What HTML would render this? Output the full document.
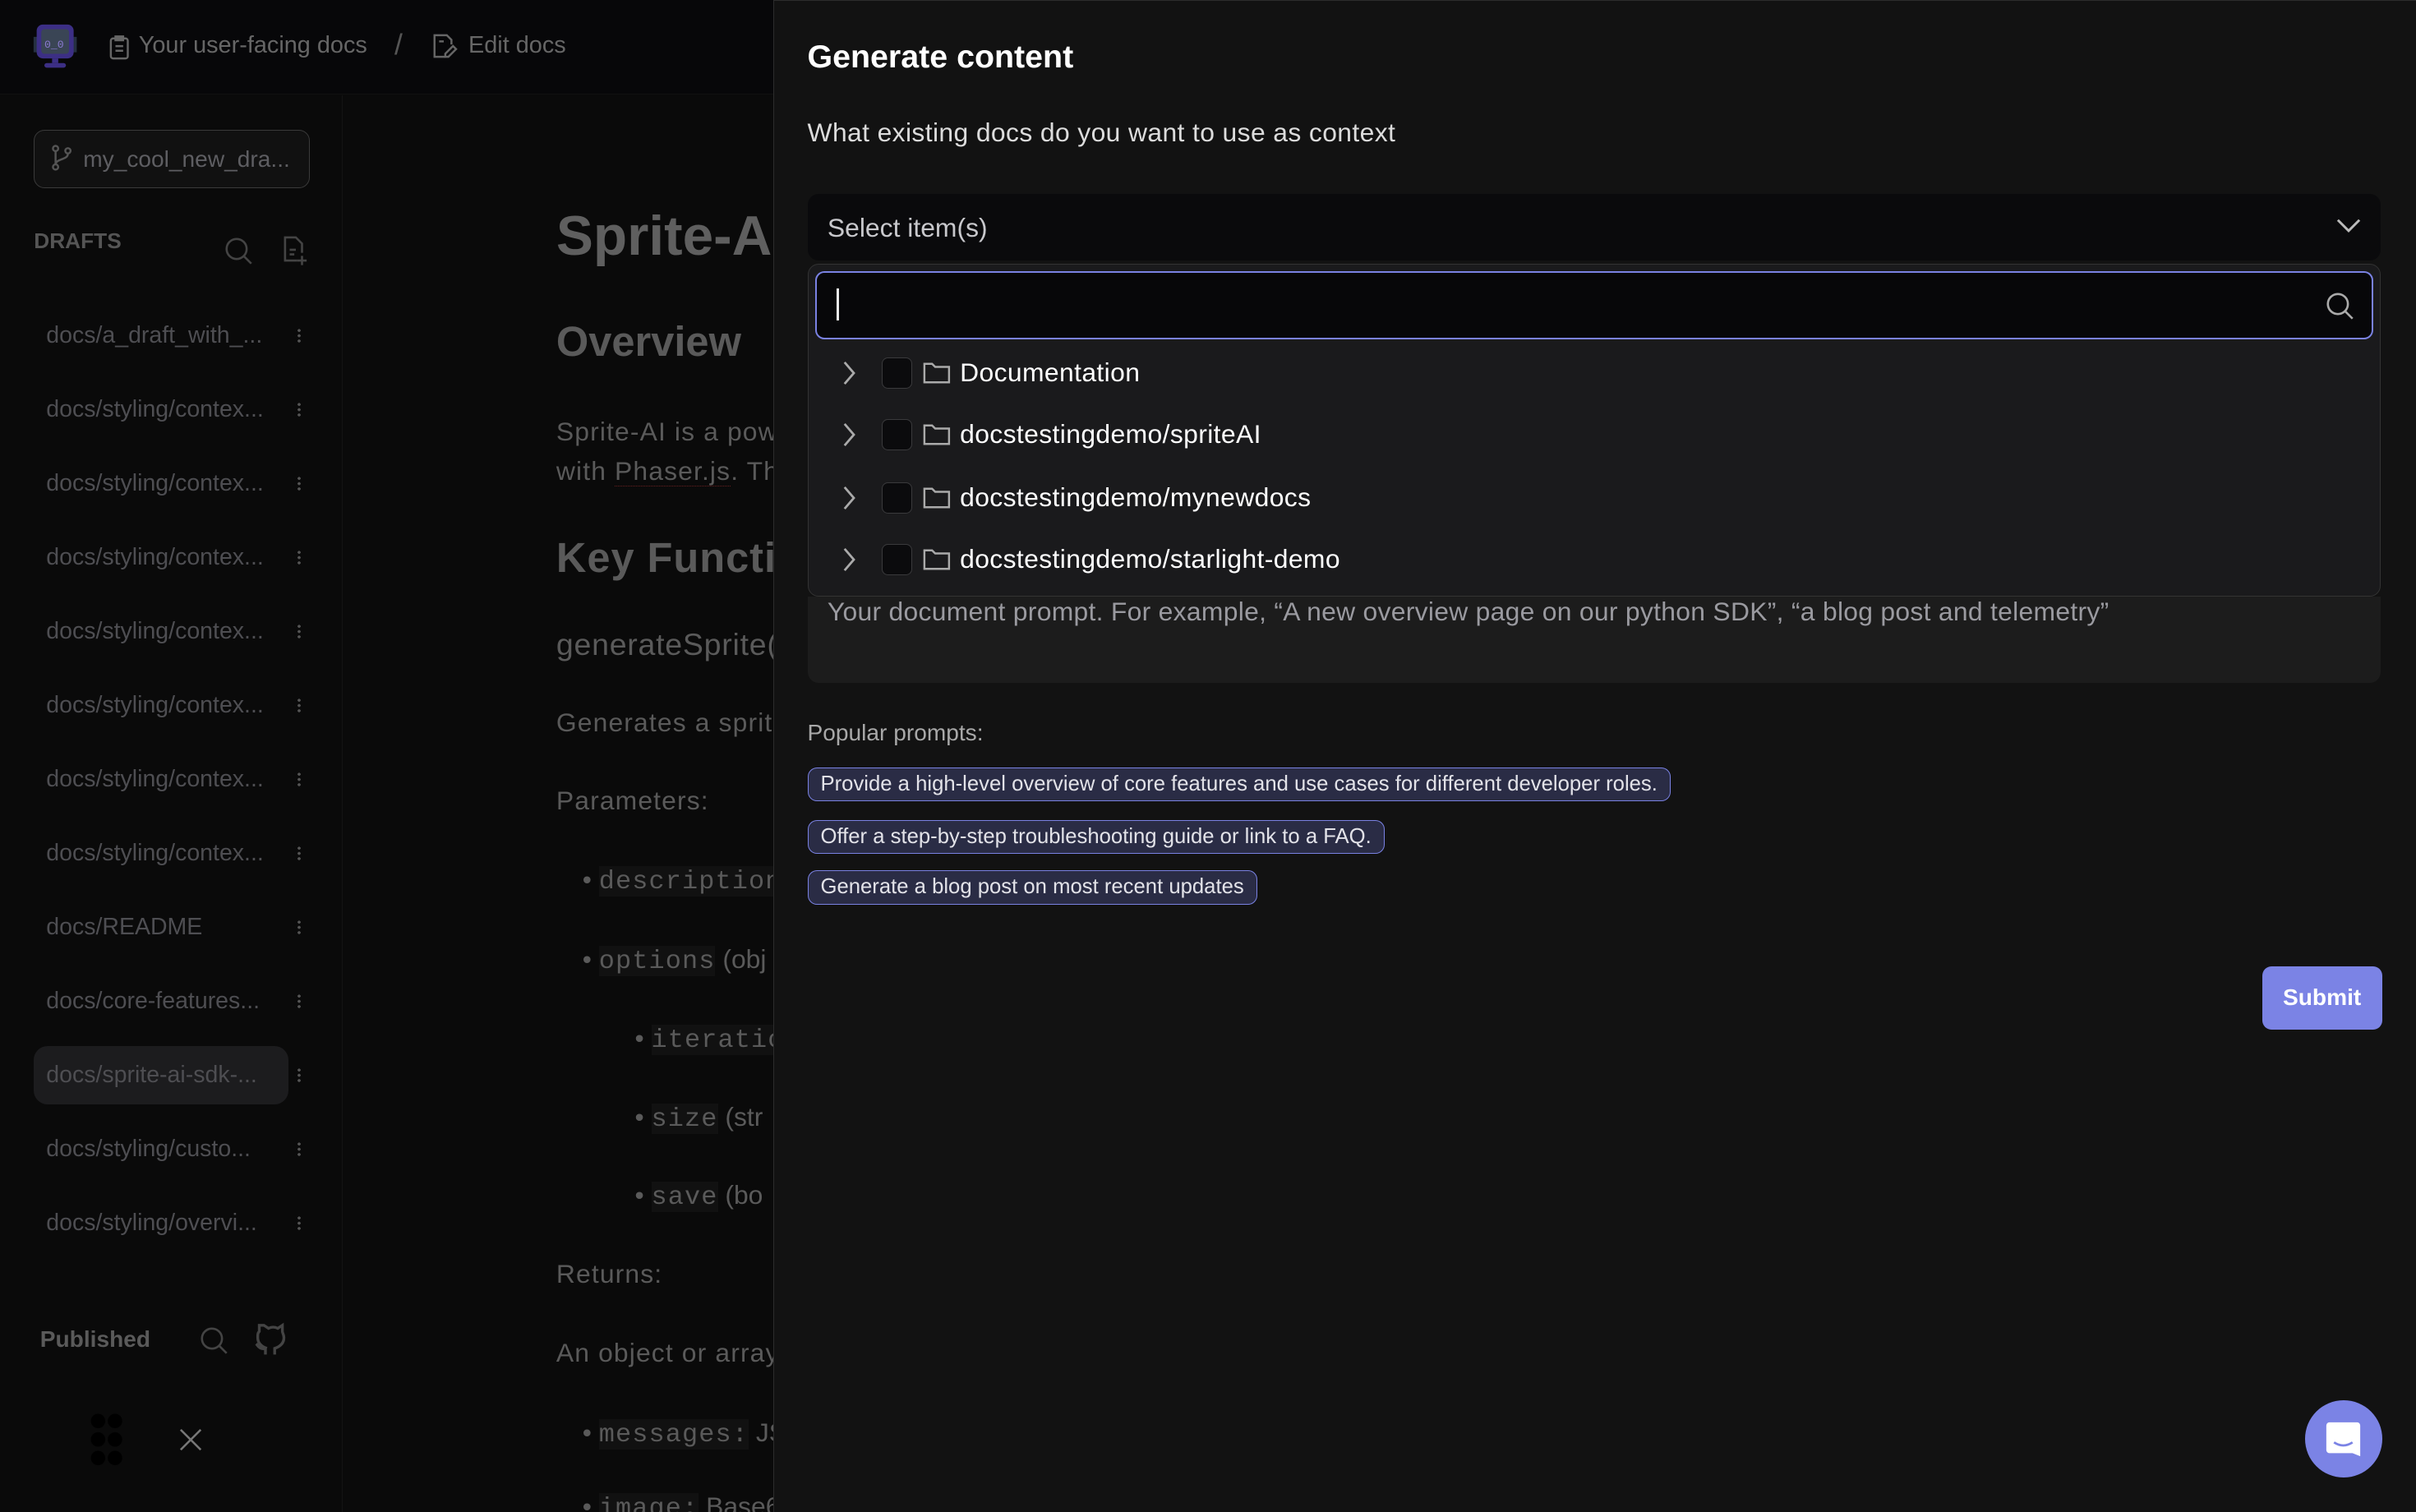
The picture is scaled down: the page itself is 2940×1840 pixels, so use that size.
<!DOCTYPE html>
<html><head><meta charset="utf-8"><style>
html,body{margin:0;padding:0;background:#0a0a0a;overflow:hidden;width:2940px;height:1840px}
#root{position:relative;width:1568px;height:982px;zoom:1.875;font-family:"Liberation Sans",sans-serif;overflow:hidden;background:#0a0a0a}
.abs{position:absolute}
.hdr{left:0;top:0;width:502px;height:61px;background:#070709;border-bottom:1px solid #111}
.side{left:0;top:62px;width:222px;height:920px;background:#0a0a0a;border-right:1px solid #141414}
.main{left:223px;top:62px;width:300px;height:920px;background:#0a0a0a}
.t{color:#666;white-space:nowrap}
.item{left:30px;font-size:15.2px;color:#4e4e52;white-space:nowrap}
.dots{left:193px;width:2px;height:10px;background:radial-gradient(circle,#555 45%,transparent 50%) 0 0/2px 3.4px repeat-y}
.panel{left:502px;top:0;width:1066px;height:982px;background:#121212;border-left:1px solid #2c2c2c;border-top:1px solid #2c2c2c;box-sizing:border-box}
.row{position:absolute;left:0;height:40px;width:100%}
.row .chev{position:absolute;left:546px}
.cb{position:absolute;left:572px;width:19px;height:19px;border:1px solid #3a3a3c;border-radius:4px;background:#0b0b0d}
.rt{position:absolute;left:623px;font-size:17px;letter-spacing:.2px;color:#fff;white-space:nowrap}
.chip{position:absolute;left:524px;height:21px;border:1px solid #7a82e3;background:#2a2c45;border-radius:6px;color:#e2e2e8;font-size:13.7px;line-height:21px;padding:0 8px;white-space:nowrap}
.mono{font-family:"Liberation Mono",monospace}
</style></head><body><div id="root">
<div class="abs hdr"></div>
<svg class="abs" style="left:21px;top:15px" width="30" height="30" viewBox="0 0 30 30">
<rect x="1" y="9" width="4" height="10" fill="#253040"/><rect x="25" y="9" width="4" height="10" fill="#253040"/>
<rect x="3" y="1" width="24" height="22" rx="4" fill="#3c2f85"/><rect x="6" y="4" width="18" height="16" rx="2" fill="#3a4555"/>
<text x="8" y="16" font-size="7" fill="#8a7ad0" font-family="Liberation Mono">0_0</text>
<rect x="13" y="23" width="4" height="3" fill="#3c2f85"/><rect x="8" y="26" width="14" height="3" rx="1.5" fill="#3c2f85"/></svg>
<svg class="abs" style="left:71px;top:23px" width="13" height="16" viewBox="0 0 13 16" fill="none" stroke="#666" stroke-width="1.3"><rect x="1" y="2" width="11" height="13" rx="1.5"/><rect x="4" y="0.7" width="5" height="2.5"/><path d="M4 7h5M4 10h5"/></svg>
<div class="abs t" style="left:90px;top:21px;font-size:15.4px">Your user-facing docs</div>
<div class="abs t" style="left:256px;top:18px;font-size:19px;color:#555">/</div>
<svg class="abs" style="left:280px;top:22px" width="17" height="17" viewBox="0 0 17 17" fill="none" stroke="#666" stroke-width="1.3"><path d="M9 15H2V1h8l3 3v3"/><path d="M5 5h3"/><path d="M14 8l2 2-5 5H9v-2z"/></svg>
<div class="abs t" style="left:304px;top:21px;font-size:15.4px">Edit docs</div>

<div class="abs side"></div>
<div class="abs" style="left:22px;top:84px;width:178px;height:37px;border:1px solid #3a3a3a;border-radius:7px;background:#111"></div>
<svg class="abs" style="left:33px;top:94px" width="14" height="17" viewBox="0 0 14 17" fill="none" stroke="#555" stroke-width="1.3"><circle cx="3" cy="2.5" r="1.7"/><circle cx="3" cy="14.5" r="1.7"/><circle cx="11" cy="4" r="1.7"/><path d="M3 4v9M11 6c0 4-8 3-8 7"/></svg>
<div class="abs t" style="left:54px;top:95px;font-size:15px;color:#5e5e62">my_cool_new_dra...</div>
<div class="abs t" style="left:22px;top:148px;font-size:14px;font-weight:bold;color:#555">DRAFTS</div>
<svg class="abs" style="left:145px;top:153px" width="20" height="20" viewBox="0 0 20 20" fill="none" stroke="#444" stroke-width="1.4"><circle cx="8.5" cy="8.5" r="6.5"/><path d="M13.5 13.5l4.5 4.5"/></svg>
<svg class="abs" style="left:184px;top:153px" width="17" height="20" viewBox="0 0 17 20" fill="none" stroke="#444" stroke-width="1.4"><path d="M9 16H1V1h7l4 4v6"/><path d="M4 9h4M4 12h3M12 13v6M9 16h6"/></svg>
<div class="abs" style="left:22px;top:679px;width:165px;height:38px;background:#1c1c1e;border-radius:9px"></div>
<div class="abs item" style="top:209px">docs/a_draft_with_...</div>
<div class="abs item" style="top:257px">docs/styling/contex...</div>
<div class="abs item" style="top:305px">docs/styling/contex...</div>
<div class="abs item" style="top:353px">docs/styling/contex...</div>
<div class="abs item" style="top:401px">docs/styling/contex...</div>
<div class="abs item" style="top:449px">docs/styling/contex...</div>
<div class="abs item" style="top:497px">docs/styling/contex...</div>
<div class="abs item" style="top:545px">docs/styling/contex...</div>
<div class="abs item" style="top:593px">docs/README</div>
<div class="abs item" style="top:641px">docs/core-features...</div>
<div class="abs item" style="top:689px">docs/sprite-ai-sdk-...</div>
<div class="abs item" style="top:737px">docs/styling/custo...</div>
<div class="abs item" style="top:785px">docs/styling/overvi...</div>
<div class="abs dots" style="top:213px"></div><div class="abs dots" style="top:261px"></div><div class="abs dots" style="top:309px"></div><div class="abs dots" style="top:357px"></div><div class="abs dots" style="top:405px"></div><div class="abs dots" style="top:453px"></div><div class="abs dots" style="top:501px"></div><div class="abs dots" style="top:549px"></div><div class="abs dots" style="top:597px"></div><div class="abs dots" style="top:645px"></div><div class="abs dots" style="top:693px"></div><div class="abs dots" style="top:741px"></div><div class="abs dots" style="top:789px"></div>
<div class="abs t" style="left:26px;top:861px;font-size:15px;font-weight:bold;color:#5a5a5a">Published</div>
<svg class="abs" style="left:129px;top:860px" width="20" height="20" viewBox="0 0 20 20" fill="none" stroke="#444" stroke-width="1.4"><circle cx="8.5" cy="8.5" r="6.5"/><path d="M13.5 13.5l4.5 4.5"/></svg>
<svg class="abs" style="left:164px;top:858px" width="22" height="22" viewBox="0 0 22 22" fill="none" stroke="#444" stroke-width="1.8"><path d="M8 21v-4c-4 1-5-2-6-3M14 21v-4c3-1 6-3 6-7 0-2-1-3-1-4V2l-3 2c-2-1-4-1-6 0L7 2H4v4c-1 1-1 2-1 4 0 4 3 6 6 7"/></svg>
<div class="abs" style="left:58px;top:916px;width:22px;height:36px;background:radial-gradient(circle,#000 55%,transparent 60%) 0 0/11px 12px"></div>
<svg class="abs" style="left:116px;top:927px" width="15" height="15" viewBox="0 0 15 15" stroke="#777" stroke-width="1.4"><path d="M1 1l13 13M14 1L1 14"/></svg>

<div class="abs main"></div>
<div class="abs t" style="left:361px;top:133px;font-size:36px;font-weight:bold;color:#5f5f5f">Sprite-AI</div>
<div class="abs t" style="left:361px;top:206px;font-size:27px;font-weight:bold;color:#5a5a5a">Overview</div>
<div class="abs t" style="left:361px;top:267px;font-size:17px;line-height:26px;color:#5a5a5a;letter-spacing:.6px">Sprite-AI is a powerful<br>with <span style="border-bottom:1px dotted #6a2020">Phaser.js</span>. The</div>
<div class="abs t" style="left:361px;top:346px;font-size:27px;font-weight:bold;color:#5a5a5a;letter-spacing:.5px">Key Functions</div>
<div class="abs t" style="left:361px;top:407px;font-size:20px;color:#5a5a5a;letter-spacing:.4px">generateSprite(</div>
<div class="abs t" style="left:361px;top:459px;font-size:17px;color:#5a5a5a;letter-spacing:.6px">Generates a sprite</div>
<div class="abs t" style="left:361px;top:510px;font-size:17px;color:#5a5a5a;letter-spacing:.6px">Parameters:</div>
<div class="abs t" style="left:378px;top:561px;font-size:17px;color:#5a5a5a">• <span class="mono" style="background:#111;letter-spacing:.6px">description</span></div>
<div class="abs t" style="left:378px;top:613px;font-size:17px;color:#5a5a5a">• <span class="mono" style="background:#111;letter-spacing:.6px">options</span> (obj</div>
<div class="abs t" style="left:412px;top:664px;font-size:17px;color:#5a5a5a">• <span class="mono" style="background:#111;letter-spacing:.6px">iterations</span></div>
<div class="abs t" style="left:412px;top:715px;font-size:17px;color:#5a5a5a">• <span class="mono" style="background:#111;letter-spacing:.6px">size</span> (str</div>
<div class="abs t" style="left:412px;top:766px;font-size:17px;color:#5a5a5a">• <span class="mono" style="background:#111;letter-spacing:.6px">save</span> (bo</div>
<div class="abs t" style="left:361px;top:817px;font-size:17px;color:#5a5a5a;letter-spacing:.6px">Returns:</div>
<div class="abs t" style="left:361px;top:868px;font-size:17px;color:#5a5a5a;letter-spacing:.6px">An object or array</div>
<div class="abs t" style="left:378px;top:920px;font-size:17px;color:#5a5a5a">• <span class="mono" style="background:#111;letter-spacing:.6px">messages:</span> JS</div>
<div class="abs t" style="left:378px;top:968px;font-size:17px;color:#5a5a5a">• <span class="mono" style="background:#111;letter-spacing:.6px">image:</span> Base6</div>

<div class="abs panel"></div>
<div class="abs" style="left:524px;top:25px;font-size:21px;font-weight:bold;color:#fff;white-space:nowrap">Generate content</div>
<div class="abs" style="left:524px;top:76px;font-size:17px;letter-spacing:.2px;color:#dcdcdc;white-space:nowrap">What existing docs do you want to use as context</div>
<div class="abs" style="left:524px;top:126px;width:1021px;height:43px;background:#0a0a0c;border-radius:7px"></div>
<div class="abs" style="left:537px;top:138px;font-size:17px;color:#c8c8cc">Select item(s)</div>
<svg class="abs" style="left:1516px;top:141px" width="16" height="11" viewBox="0 0 16 11" fill="none" stroke="#bbb" stroke-width="1.6"><path d="M1 2l7 7 7-7"/></svg>
<div class="abs" style="left:524px;top:387px;width:1021px;height:56px;background:#1c1c1c;border-radius:0 0 7px 7px"></div>
<div class="abs" style="left:537px;top:387px;font-size:17px;letter-spacing:.15px;color:#9a9aa0;white-space:nowrap">Your document prompt. For example, “A new overview page on our python SDK”, “a blog post and telemetry”</div>
<div class="abs" style="left:524px;top:171px;width:1021px;height:216px;background:#1a1a1c;border:1px solid #333;border-radius:7px;box-sizing:border-box"></div>
<div class="abs" style="left:529px;top:176px;width:1011px;height:44px;background:#070709;border:1.5px solid #7a82e3;border-radius:6px;box-sizing:border-box"></div>
<div class="abs" style="left:543px;top:187px;width:1.5px;height:21px;background:#eee"></div>
<svg class="abs" style="left:1509px;top:189px" width="20" height="20" viewBox="0 0 20 20" fill="none" stroke="#aaa" stroke-width="1.4"><circle cx="8.5" cy="8.5" r="6.5"/><path d="M13.5 13.5l4.5 4.5"/></svg>
<div class="abs" style="left:0;top:222px;width:1568px;height:165px">
<div class="row" style="top:0"><svg class="chev" style="top:12px" width="10" height="16" viewBox="0 0 10 16" fill="none" stroke="#aaa" stroke-width="1.5"><path d="M2 1l6 7-6 7"/></svg><div class="cb" style="top:10px"></div><svg style="position:absolute;left:599px;top:12px" width="18" height="16" viewBox="0 0 18 16" fill="none" stroke="#aaa" stroke-width="1.3"><path d="M1 2h5l2 2h9v10H1z"/></svg><div class="rt" style="top:10px">Documentation</div></div>
<div class="row" style="top:40px"><svg class="chev" style="top:12px" width="10" height="16" viewBox="0 0 10 16" fill="none" stroke="#aaa" stroke-width="1.5"><path d="M2 1l6 7-6 7"/></svg><div class="cb" style="top:10px"></div><svg style="position:absolute;left:599px;top:12px" width="18" height="16" viewBox="0 0 18 16" fill="none" stroke="#aaa" stroke-width="1.3"><path d="M1 2h5l2 2h9v10H1z"/></svg><div class="rt" style="top:10px">docstestingdemo/spriteAI</div></div>
<div class="row" style="top:81px"><svg class="chev" style="top:12px" width="10" height="16" viewBox="0 0 10 16" fill="none" stroke="#aaa" stroke-width="1.5"><path d="M2 1l6 7-6 7"/></svg><div class="cb" style="top:10px"></div><svg style="position:absolute;left:599px;top:12px" width="18" height="16" viewBox="0 0 18 16" fill="none" stroke="#aaa" stroke-width="1.3"><path d="M1 2h5l2 2h9v10H1z"/></svg><div class="rt" style="top:10px">docstestingdemo/mynewdocs</div></div>
<div class="row" style="top:121px"><svg class="chev" style="top:12px" width="10" height="16" viewBox="0 0 10 16" fill="none" stroke="#aaa" stroke-width="1.5"><path d="M2 1l6 7-6 7"/></svg><div class="cb" style="top:10px"></div><svg style="position:absolute;left:599px;top:12px" width="18" height="16" viewBox="0 0 18 16" fill="none" stroke="#aaa" stroke-width="1.3"><path d="M1 2h5l2 2h9v10H1z"/></svg><div class="rt" style="top:10px">docstestingdemo/starlight-demo</div></div>
</div>
<div class="abs" style="left:524px;top:467px;font-size:15px;color:#a8a8a8">Popular prompts:</div>
<div class="chip" style="top:498px">Provide a high-level overview of core features and use cases for different developer roles.</div>
<div class="chip" style="top:532px">Offer a step-by-step troubleshooting guide or link to a FAQ.</div>
<div class="chip" style="top:565px">Generate a blog post on most recent updates</div>
<div class="abs" style="left:1468px;top:627px;width:78px;height:41px;background:#7b83e5;border-radius:6px;color:#fff;font-weight:bold;font-size:15px;line-height:41px;text-align:center">Submit</div>
<div class="abs" style="left:1496px;top:909px;width:50px;height:50px;border-radius:50%;background:#7b83e5"></div>
<svg class="abs" style="left:1509px;top:922px" width="24" height="24" viewBox="0 0 24 24"><path d="M3 1h18a2 2 0 0 1 2 2v20l-5-2H3a2 2 0 0 1-2-2V3a2 2 0 0 1 2-2z" fill="#fff"/><path d="M6 14q6 4 12 0" stroke="#7b83e5" stroke-width="1.5" fill="none"/></svg>
</div></body></html>
